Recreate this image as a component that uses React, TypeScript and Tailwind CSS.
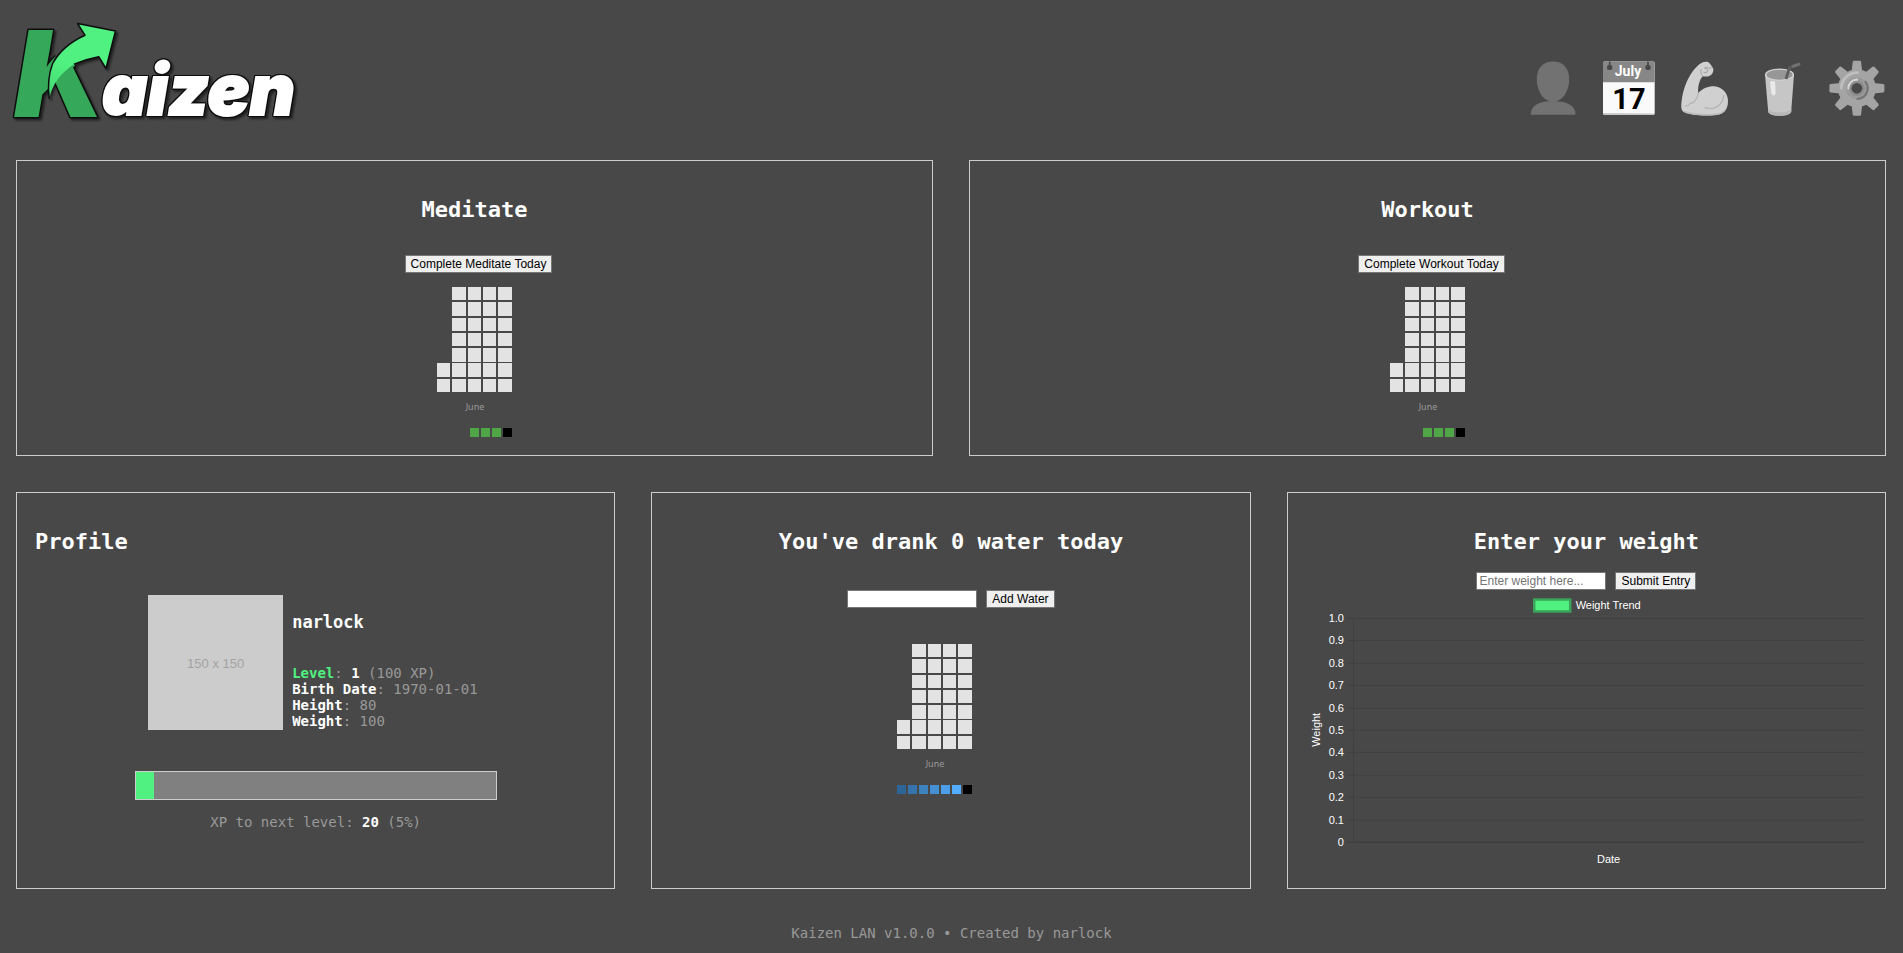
import React from "react";

const LEVEL_PROGRESS = 5;

function Logo() {
  return (
    <svg
      viewBox="8 16 300 112"
      className="h-28 w-[300px] overflow-visible drop-shadow-[2px_2px_1px_rgba(0,0,0,0.55)]"
      role="img"
      aria-label="Kaizen"
    >
      <defs>
        <linearGradient id="arrow" gradientUnits="userSpaceOnUse" x1="49" y1="96" x2="66" y2="64">
          <stop offset="0" stopColor="#45d873" />
          <stop offset="1" stopColor="#50f180" />
        </linearGradient>
        <clipPath id="stem">
          <path d="M0 16 H61 L54 64 L74 47 L75 64 L112 130 H0 Z" />
        </clipPath>
      </defs>
      <g clipPath="url(#stem)">
        <text
          x="14"
          y="117"
          fontFamily="Inter, 'Liberation Sans', sans-serif"
          fontStyle="italic"
          fontWeight="900"
          fontSize="120"
          fill="#36a85a"
          stroke="#0d0d0d"
          strokeWidth="3"
          paintOrder="stroke"
          strokeLinejoin="round"
        >
          K
        </text>
      </g>
      <path
        d="M77.6 23.6 L115.5 31 L106 68.5 L98.7 56.7 Q86 59 74 64.3 C61 73 52 84 49.3 99 C47.5 86 49 73 52.7 63.3 C60 50 70 42 85 35.2 Z"
        fill="url(#arrow)"
      />
      <path
        d="M74 64.3 Q86 59 98.7 56.7 L106 68.5 L115.5 31 L77.6 23.6 L85 35.2 C70 42 60 50 52.7 63.3 C49 73 47.5 86 49.3 99"
        fill="none"
        stroke="#0d0d0d"
        strokeWidth="1.5"
        strokeLinejoin="round"
      />
      <g className="[filter:drop-shadow(1px_0_0_#0d0d0d)_drop-shadow(-1px_0_0_#0d0d0d)_drop-shadow(0_1px_0_#0d0d0d)_drop-shadow(0_-1px_0_#0d0d0d)]">
        <text
          x="102"
          y="115"
          fontFamily="Inter, 'Liberation Sans', sans-serif"
          fontStyle="italic"
          fontWeight="900"
          fontSize="70"
          fill="#ffffff"
          stroke="#ffffff"
          strokeWidth="2"
        >
          aizen
        </text>
      </g>
    </svg>
  );
}

function PersonIcon() {
  return (
    <svg viewBox="0 0 60 60" className="size-[60px]" fill="#727272">
      <path d="M30 2.6 C39.5 2.6 46.2 8.6 46.2 20.5 C46.2 31.5 40 42.6 30 42.6 C20 42.6 13.8 31.5 13.8 20.5 C13.8 8.6 20.5 2.6 30 2.6 Z" />
      <path d="M7.8 55.7 C7.6 46 17 42 30 42 C43 42 52.6 46 52.5 55.7 Z" />
    </svg>
  );
}

function CalendarIcon() {
  return (
    <svg viewBox="0 0 60 60" className="size-[60px]">
      <rect x="4" y="2.4" width="51.7" height="53.3" rx="1.6" fill="#fafafa" />
      <path d="M4 23.3 V4 Q4 2.4 5.6 2.4 H54 Q55.7 2.4 55.7 4 V23.3 Z" fill="#878787" />
      <path d="M4 54 V55 Q4.5 55.9 5.6 55.9 H54 Q55.5 55.9 55.7 54.4 Z" fill="#c8c8c8" />
      <path d="M10.7 2.4 V8 M49 2.4 V8" stroke="#484848" strokeWidth="1.6" />
      <circle cx="10.7" cy="8.4" r="2.7" fill="#484848" />
      <circle cx="49" cy="8.4" r="2.7" fill="#484848" />
      <text x="29" y="17.3" textAnchor="middle" fontFamily="Roboto, sans-serif" fontWeight="700" fontSize="14" fill="#fff">
        July
      </text>
      <text x="30" y="50" textAnchor="middle" fontFamily="Roboto, sans-serif" fontWeight="700" fontSize="29" fill="#000">
        17
      </text>
    </svg>
  );
}

function ArmIcon() {
  return (
    <svg viewBox="0 0 60 60" className="size-[60px]" fill="none" strokeLinecap="round" strokeLinejoin="round">
      <path
        d="M22 7.5 C25 3.8 29 2.2 32.3 2.8 C34.5 3.5 36 6 37.5 8.2 C39 10.5 38.5 13.5 36.3 15.8 C34 18 30.5 17.8 27.5 17.2 C24.2 21.5 22.6 28 23.3 34.3 C27 29.5 33 27.2 39 27.3 C47.5 27.8 53 34.5 53 41.8 C53 48.5 50.5 54 44 55.5 C37 57.4 15 57 8.5 52.8 C5.8 51 6.1 46.5 6.5 43 C7.5 30 14 14.5 22 7.5 Z"
        fill="#d0d0d0"
      />
      <path d="M15.5 44 C18.5 45 22 40.5 23.3 34.3 M15.5 44 C14 46 12.5 47 10.5 47.3" stroke="#b2b2b2" strokeWidth="1.1" />
      <path d="M30 48.7 C38.5 51.5 47.5 47 48.7 36.5" stroke="#b2b2b2" strokeWidth="1.3" />
      <path d="M27.5 17.2 C26 14.8 25.5 12.5 26 10.3 M29.5 9 C31 7.7 33.4 7.9 34.5 9.5 M29.5 9 L32.6 10.2 L32 13.2 L29 13.7 M34.5 9.5 L36.5 8.2" stroke="#a5a5a5" strokeWidth="1" />
      <path d="M8 51.5 C20 55.5 37 55.8 45 53.8 C49 52 51.5 49 52.6 45 C51.8 51 49 54.5 44 55.5 C37 57.4 15 57 8.5 52.8 Z" fill="#bcbcbc" />
    </svg>
  );
}

function CupIcon() {
  return (
    <svg viewBox="0 0 60 60" className="size-[60px]" fill="none">
      <path d="M14 15.5 L17.2 52.5 C18 58.2 39.5 58.2 40.2 52.5 L43 15.5 Z" fill="#c6c6c6" />
      <path d="M17.2 50 C20 54.5 37.5 54.5 40.4 50 L40.2 52.8 C39.5 58.2 18 58.2 17.2 52.8 Z" fill="#b8b8b8" />
      <ellipse cx="28.5" cy="15.6" rx="14.5" ry="6.2" fill="#d4d4d4" />
      <ellipse cx="28.5" cy="15.7" rx="13" ry="5" fill="#979797" />
      <path d="M35 20 L38.5 8.6 L49 4.9" stroke="#5c5c5c" strokeWidth="2.8" strokeLinejoin="round" />
      <path d="M41 7.6 L49 4.9" stroke="#717171" strokeWidth="2.8" />
      <path d="M19 23.5 C20.5 21.3 24 21.8 24.2 24 L24.6 34 C24.5 37.3 20.8 37.2 20.3 34 Z" fill="#e9e9e9" />
    </svg>
  );
}

function GearIcon() {
  const teeth = [0, 45, 90, 135, 180, 225, 270, 315];
  return (
    <svg viewBox="0 0 60 60" className="size-[60px]" fill="none" strokeLinecap="round">
      {teeth.map((angle) => (
        <path key={angle} d="M24.6 13 L25.7 3 Q25.9 1.8 27 1.8 H32.8 Q33.9 1.8 34.1 3 L35.2 13 Z" fill="#a4a4a4" transform={`rotate(${angle} 29.9 29.3)`} />
      ))}
      <circle cx="29.9" cy="29.3" r="19" fill="#a4a4a4" />
      <path d="M14.3 29.3 A15.6 15.6 0 0 1 30.5 13.6" stroke="#bfbfbf" strokeWidth="2.6" />
      <circle cx="29.9" cy="29.3" r="11" fill="#9a9a9a" />
      <path d="M38.5 22.8 A10.7 10.7 0 0 1 30.5 40" stroke="#747474" strokeWidth="2.2" />
      <path d="M21.5 29.3 A8.6 8.6 0 0 1 29.9 20.7" stroke="#d5d5d5" strokeWidth="2.4" />
      <circle cx="29.9" cy="29.3" r="6.6" stroke="#8c8c8c" strokeWidth="2" />
      <circle cx="29.9" cy="29.3" r="5.4" fill="#484848" />
    </svg>
  );
}

const NAV = [
  { label: "Profile", Icon: PersonIcon },
  { label: "Calendar", Icon: CalendarIcon },
  { label: "Workout", Icon: ArmIcon },
  { label: "Water", Icon: CupIcon },
  { label: "Settings", Icon: GearIcon },
];

function Heatmap({ legend }: { legend: string[] }) {
  const columns = [0, 1, 2, 3, 4];
  const rows = [0, 1, 2, 3, 4, 5, 6];
  const start = (i: number) => Math.round(i * 15.25);
  const size = (i: number) => Math.round(i * 15.25 + 13.5) - start(i);
  return (
    <svg viewBox="0 0 75 151" className="h-[151px] w-[75px]" role="img" aria-label="Activity in June">
      {columns.map((c) =>
        rows
          .filter((r) => c > 0 || r > 4)
          .map((r) => (
            <rect key={`${c}-${r}`} x={start(c)} y={start(r)} width={c ? size(c) : 13} height={r ? size(r) : 13} fill="#e3e3e3" />
          ))
      )}
      <text x="38" y="123" textAnchor="middle" fontFamily="'Noto Sans', sans-serif" fontSize="9" fill="#999">
        June
      </text>
      {legend.map((color, i) => (
        <rect key={color + i} x={75 - 11 * (legend.length - i) + 2} y="141" width="9" height="9" fill={color} />
      ))}
    </svg>
  );
}

const GREENS = ["#50a546", "#50a546", "#50a546", "#000000"];
const BLUES = ["#2c6596", "#3574ac", "#3d82bf", "#4590d2", "#4c9ee8", "#54acfc", "#000000"];

function Card({ children }: { children: React.ReactNode }) {
  return (
    <section className="flex flex-col items-center border border-[#ccc] px-[18px] pt-[34px]">{children}</section>
  );
}

function Title({ children }: { children: React.ReactNode }) {
  return <h2 className="text-[22px] leading-[30px] font-bold text-white">{children}</h2>;
}

function Button({ children }: { children: React.ReactNode }) {
  return (
    <button
      type="button"
      className="h-[18px] border border-[#767676] bg-[#efefef] px-[5px] font-['Liberation_Sans',sans-serif] text-xs leading-4 whitespace-nowrap text-black"
    >
      {children}
    </button>
  );
}

function Field({ label, placeholder }: { label: string; placeholder?: string }) {
  return (
    <input
      type="text"
      aria-label={label}
      placeholder={placeholder}
      className="h-[18px] w-[130px] border border-[#767676] bg-white px-[2px] font-['Liberation_Sans',sans-serif] text-xs leading-4 text-black placeholder:text-[#757575]"
    />
  );
}

function HabitCard({ name }: { name: string }) {
  return (
    <Card>
      <Title>{name}</Title>
      <div className="mt-[30px] ml-2 flex">
        <Button>Complete {name} Today</Button>
      </div>
      <div className="mt-[14px] mb-[17px]">
        <Heatmap legend={GREENS} />
      </div>
    </Card>
  );
}

function ProfileCard() {
  return (
    <Card>
      <div className="w-full">
        <Title>Profile</Title>
      </div>
      <div className="mt-[38px] flex gap-[9px]">
        <div className="flex size-[135px] items-center justify-center bg-[#ccc] pt-[3px] font-['Liberation_Sans',sans-serif] text-[13px] text-[#a3a3a3]">
          150 x 150
        </div>
        <div className="flex min-w-[191px] flex-col justify-between pt-4 pb-px">
          <h3 className="text-[17px] leading-[22px] font-bold text-white">narlock</h3>
          <div className="leading-4">
            <p>
              <b className="text-[#50f180]">Level</b>: <b className="text-white">1</b> (100 XP)
            </p>
            <p>
              <b className="text-white">Birth Date</b>: 1970-01-01
            </p>
            <p>
              <b className="text-white">Height</b>: 80
            </p>
            <p>
              <b className="text-white">Weight</b>: 100
            </p>
          </div>
        </div>
      </div>
      <div
        role="progressbar"
        aria-label="Level progress"
        aria-valuenow={LEVEL_PROGRESS}
        className="mt-[41px] h-[29px] w-full max-w-[362px] border border-[#ccc] bg-[#808080]"
      >
        <div className="h-full bg-[#50f180]" style={{ width: `${LEVEL_PROGRESS}%` }} />
      </div>
      <p className="mt-[14px] leading-4">
        XP to next level: <b className="text-white">20</b> (5%)
      </p>
    </Card>
  );
}

function WaterCard() {
  return (
    <Card>
      <Title>You've drank 0 water today</Title>
      <div className="mt-[33px] flex gap-[9px]">
        <Field label="Water amount" />
        <Button>Add Water</Button>
      </div>
      <div className="mt-9 mr-8">
        <Heatmap legend={BLUES} />
      </div>
    </Card>
  );
}

function WeightChart() {
  const ticks = ["1.0", "0.9", "0.8", "0.7", "0.6", "0.5", "0.4", "0.3", "0.2", "0.1", "0"];
  const y = (i: number) => Math.round(i * 22.4) + 24.5;
  return (
    <svg
      viewBox="0 0 562 277"
      className="h-auto w-full"
      fontFamily="'Liberation Sans', sans-serif"
      fontSize="11"
      fill="#ffffff"
      role="img"
      aria-label="Weight trend by date"
    >
      <rect x="228.5" y="5.5" width="36" height="12" fill="#50f180" stroke="#39a35b" strokeWidth="2.5" />
      <text x="270" y="15">
        Weight Trend
      </text>
      {ticks.map((tick, i) => (
        <g key={tick}>
          <path d={`M41 ${y(i)} H558`} stroke={i === 10 ? "#3a3a3a" : "#404040"} />
          <text x="38" y={y(i) + 4} textAnchor="end">
            {tick}
          </text>
        </g>
      ))}
      <path d="M47.5 24 V249" stroke="#404040" />
      <text x="303" y="269" textAnchor="middle">
        Date
      </text>
      <text transform="translate(14 136) rotate(-90)" textAnchor="middle">
        Weight
      </text>
    </svg>
  );
}

function WeightCard() {
  return (
    <Card>
      <Title>Enter your weight</Title>
      <div className="mt-[15px] flex gap-[9px]">
        <Field label="Weight" placeholder="Enter weight here..." />
        <Button>Submit Entry</Button>
      </div>
      <div className="mt-1 mb-[17px] w-full">
        <WeightChart />
      </div>
    </Card>
  );
}

export default function App() {
  return (
    <div className="min-h-screen bg-[#484848] pt-4 font-['DejaVu_Sans_Mono',monospace] text-sm text-[#999]">
      <header className="flex items-end justify-between pr-4 pl-2">
        <a href="#home">
          <Logo />
        </a>
        <nav className="mb-[9px] flex gap-4">
          {NAV.map(({ label, Icon }) => (
            <a key={label} href={`#${label.toLowerCase()}`} aria-label={label}>
              <Icon />
            </a>
          ))}
        </nav>
      </header>
      <main className="mt-8 flex flex-col gap-9 pr-[17px] pl-4">
        <div className="grid grid-cols-2 gap-9">
          <HabitCard name="Meditate" />
          <HabitCard name="Workout" />
        </div>
        <div className="grid grid-cols-3 gap-9">
          <ProfileCard />
          <WaterCard />
          <WeightCard />
        </div>
      </main>
      <footer className="mt-9 pb-3 text-center leading-4">Kaizen LAN v1.0.0 • Created by narlock</footer>
    </div>
  );
}
